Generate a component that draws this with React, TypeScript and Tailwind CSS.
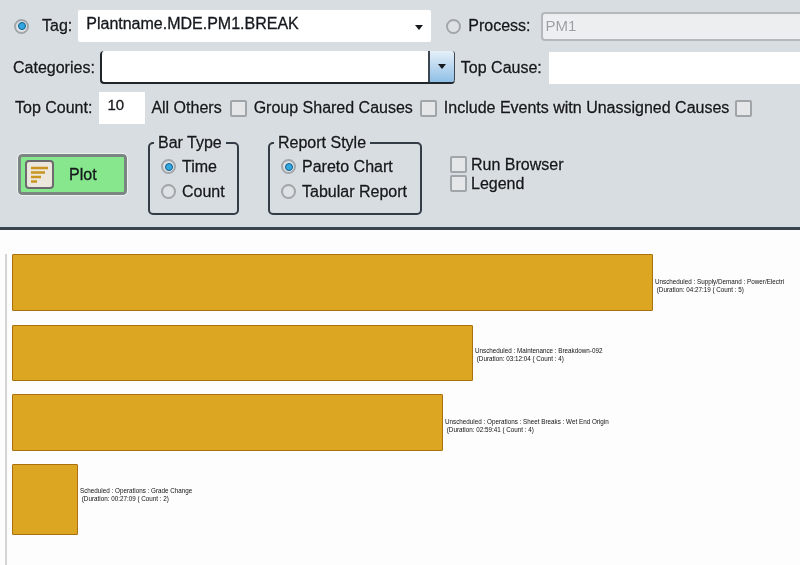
const font = "font-['Liberation_Sans',Arial,sans-serif]";

const bars = [
  { width: 641, height: 57, top: "mt-[24px]", shift: "pt-[6px]", label: "Unscheduled : Supply/Demand : Power/Electri", info: "(Duration: 04:27:19 ( Count : 5)" },
  { width: 461, height: 56, top: "mt-[14px]", shift: "pt-[4px]", label: "Unscheduled : Maintenance : Breakdown-092", info: "(Duration: 03:12:04 ( Count : 4)" },
  { width: 431, height: 57, top: "mt-[13px]", shift: "pt-[6px]", label: "Unscheduled : Operations : Sheet Breaks : Wet End Origin", info: "(Duration: 02:59:41 ( Count : 4)" },
  { width: 66, height: 71, top: "mt-[13px]", shift: "pb-[9px]", label: "Scheduled : Operations : Grade Change", info: "(Duration: 00:27:09 ( Count : 2)" },
];

function Radio({ on }: { on?: boolean }) {
  return (
    <span className="flex h-[15px] w-[15px] shrink-0 items-center justify-center rounded-full border-2 border-[#a2a6ab] bg-[#dfe2e4]">
      {on && <span className="h-[8px] w-[8px] rounded-full border border-[#0b5f8f] bg-[#35a7e0]" />}
    </span>
  );
}

function Check({ className = "" }: { className?: string }) {
  return <span className={`block h-[17px] w-[17px] shrink-0 rounded-[2px] border-2 border-[#a0a5aa] bg-[#e4e6e8] ${className}`} />;
}

function Group({ title, width, options }: { title: string; width: string; options: string[] }) {
  return (
    <div className={`relative h-[73px] ${width} rounded-[5px] border-2 border-[#343c48] px-[11px] pt-[10px]`}>
      <span className="absolute left-[4px] top-[-11px] bg-[#d8dde1] px-[4px] text-[16px] leading-[20px]">{title}</span>
      {options.map((o, i) => (
        <div key={o} className="flex h-[25px] items-center gap-[6px] text-[16px]">
          <Radio on={i === 0} />
          <span>{o}</span>
        </div>
      ))}
    </div>
  );
}

export default function App() {
  return (
    <div className={`h-[565px] w-[800px] overflow-hidden bg-[#fdfdfd] text-[#15181c] blur-[0.4px] ${font}`}>
      <div className="h-[230px] border-b-[3px] border-[#39444c] bg-[#d8dde1] pt-[10px] [-webkit-text-stroke:0.3px_#15181c] [text-shadow:0_0_2px_#fff]">
        {/* Tag / Process */}
        <div className="flex h-[32px] items-center">
          <span className="ml-[14px]"><Radio on /></span>
          <span className="ml-[13px] text-[16px]">Tag:</span>
          <div className="ml-[6px] flex h-[32px] w-[353px] items-center justify-between rounded-[2px] bg-white pb-[4px] pl-[8px] pr-[8px] text-[16px]">
            <span>Plantname.MDE.PM1.BREAK</span>
            <span className="mt-[6px] h-0 w-0 border-x-[4px] border-t-[5px] border-x-transparent border-t-[#15181c]" />
          </div>
          <span className="ml-[15px]"><Radio /></span>
          <span className="ml-[7px] text-[16px]">Process:</span>
          <div className="ml-[10px] flex h-[29px] flex-1 items-center rounded-l-[4px] border-2 border-r-0 border-[#b4b8bc] bg-[#eceeef] pl-[3px] text-[15px] text-[#9a9ea2] [-webkit-text-stroke:0]">
            PM1
          </div>
        </div>

        {/* Categories / Top Cause */}
        <div className="mt-[9px] flex h-[33px] items-center">
          <span className="ml-[13px] text-[16px]">Categories:</span>
          <div className="ml-[5px] flex h-[33px] w-[355px] rounded-[4px] border-b-2 border-l-2 border-[#20262c] bg-white">
            <div className="flex-1" />
            <div className="flex w-[27px] items-center justify-center rounded-r-[3px] border-l-2 border-r border-[#3c4650] bg-gradient-to-b from-[#e6f0f8] to-[#8fbfe6]">
              <span className="h-0 w-0 border-x-[4px] border-t-[5px] border-x-transparent border-t-[#15181c]" />
            </div>
          </div>
          <span className="ml-[6px] text-[16px]">Top Cause:</span>
          <div className="ml-[7px] h-[32px] flex-1 bg-white" />
        </div>

        {/* Top count and options */}
        <div className="mt-[8px] flex h-[32px] items-center text-[16px]">
          <span className="ml-[15px]">Top Count:</span>
          <div className="ml-[7px] h-[32px] w-[46px] bg-white pl-[8px] pt-[2px] text-[15px]">10</div>
          <span className="ml-[6px]">All Others</span>
          <Check className="ml-[8px]" />
          <span className="ml-[7px]">Group Shared Causes</span>
          <Check className="ml-[7px]" />
          <span className="ml-[7px]">Include Events witn Unassigned Causes</span>
          <Check className="ml-[6px]" />
        </div>

        {/* Plot, bar type, report style */}
        <div className="mt-[18px] flex items-start">
          <button className="ml-[18px] mt-[12px] flex h-[41px] w-[109px] items-center rounded-[4px] border-[3px] border-[#7b8582] bg-[#86e78c] pl-[4px] text-[16px] outline outline-1 outline-[#eef0f0]">
            <span className="flex h-[29px] w-[29px] items-center justify-center rounded-[4px] border-2 border-[#6c6a6e] bg-[#ece7dc]">
              <svg width="20" height="20" viewBox="0 0 20 20" fill="none" stroke="#c8951f" strokeWidth="2.5">
                <path d="M1 3h17M1 7.5h14M1 12h10M1 16.5h6" />
              </svg>
            </span>
            <span className="ml-[15px]">Plot</span>
          </button>
          <div className="ml-[21px]">
            <Group title="Bar Type" width="w-[91px]" options={["Time", "Count"]} />
          </div>
          <div className="ml-[29px]">
            <Group title="Report Style" width="w-[154px]" options={["Pareto Chart", "Tabular Report"]} />
          </div>
          <div className="ml-[28px] mt-[13px] flex flex-col text-[16px] leading-[19px]">
            <div className="flex h-[19px] items-center gap-[4px]"><Check /><span>Run Browser</span></div>
            <div className="flex h-[19px] items-center gap-[4px]"><Check /><span>Legend</span></div>
          </div>
        </div>
      </div>

      {/* Chart */}
      <div className="ml-[5px] h-[335px] border-l-2 border-[#d2d4d6] pl-[5px]">
        {bars.map((b) => (
          <div key={b.label} className={`flex items-center ${b.top}`}>
            <div
              className="shrink-0 rounded-[1px] border border-[#a8700f] bg-[#dca522]"
              style={{ width: b.width, height: b.height }}
            />
            <div className={`ml-[2px] whitespace-pre text-[6.3px] leading-[8px] text-[#111] ${b.shift}`}>
              <div>{b.label}</div>
              <div> {b.info}</div>
            </div>
          </div>
        ))}
      </div>
    </div>
  );
}
